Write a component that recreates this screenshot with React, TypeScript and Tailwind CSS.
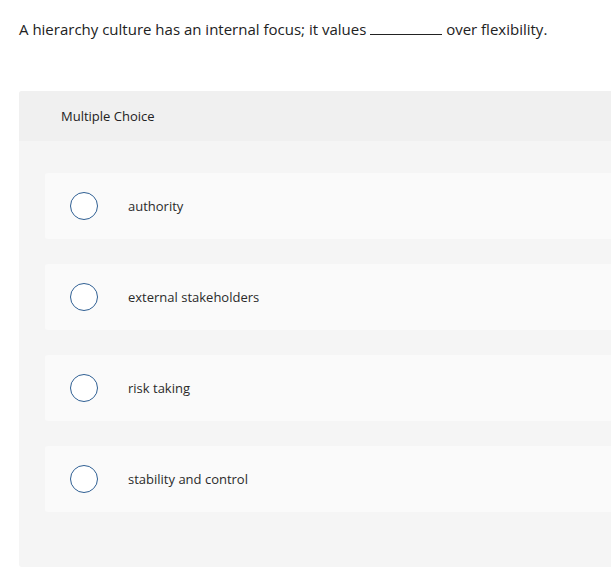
import React from "react";

const options = ["authority", "external stakeholders", "risk taking", "stability and control"];

function Radio() {
  return <span className="block h-[28px] w-[28px] shrink-0 rounded-full border-[1.5px] border-[#2f5f93] bg-white" />;
}

export default function App() {
  return (
    <div className="h-[567px] w-[611px] overflow-hidden bg-white font-['Open_Sans','Liberation_Sans',sans-serif] text-[#222]">
      <p className="pl-[19px] pt-[19px] text-[15px] leading-[20px]">
        A hierarchy culture has an internal focus; it values{" "}
        <span className="inline-block w-[72px] border-b border-[#222] align-baseline" /> over flexibility.
      </p>

      <div className="ml-[19px] mt-[52px] w-[620px] rounded-[3px] bg-[#f5f5f5] pb-[55px]">
        <div className="flex h-[50px] items-center rounded-t-[3px] bg-[#f0f0f0] pl-[42px] pt-[2px] text-[13px]">
          Multiple Choice
        </div>

        <div className="flex flex-col gap-[25px] pl-[26px] pt-[32px]">
          {options.map((opt) => (
            <div key={opt} className="flex h-[66px] items-center rounded-[3px] bg-[#fafafa] pl-[25px]">
              <Radio />
              <span className="ml-[30px] pt-[2px] text-[13px] text-[#2a2a2a]">{opt}</span>
            </div>
          ))}
        </div>
      </div>
    </div>
  );
}
